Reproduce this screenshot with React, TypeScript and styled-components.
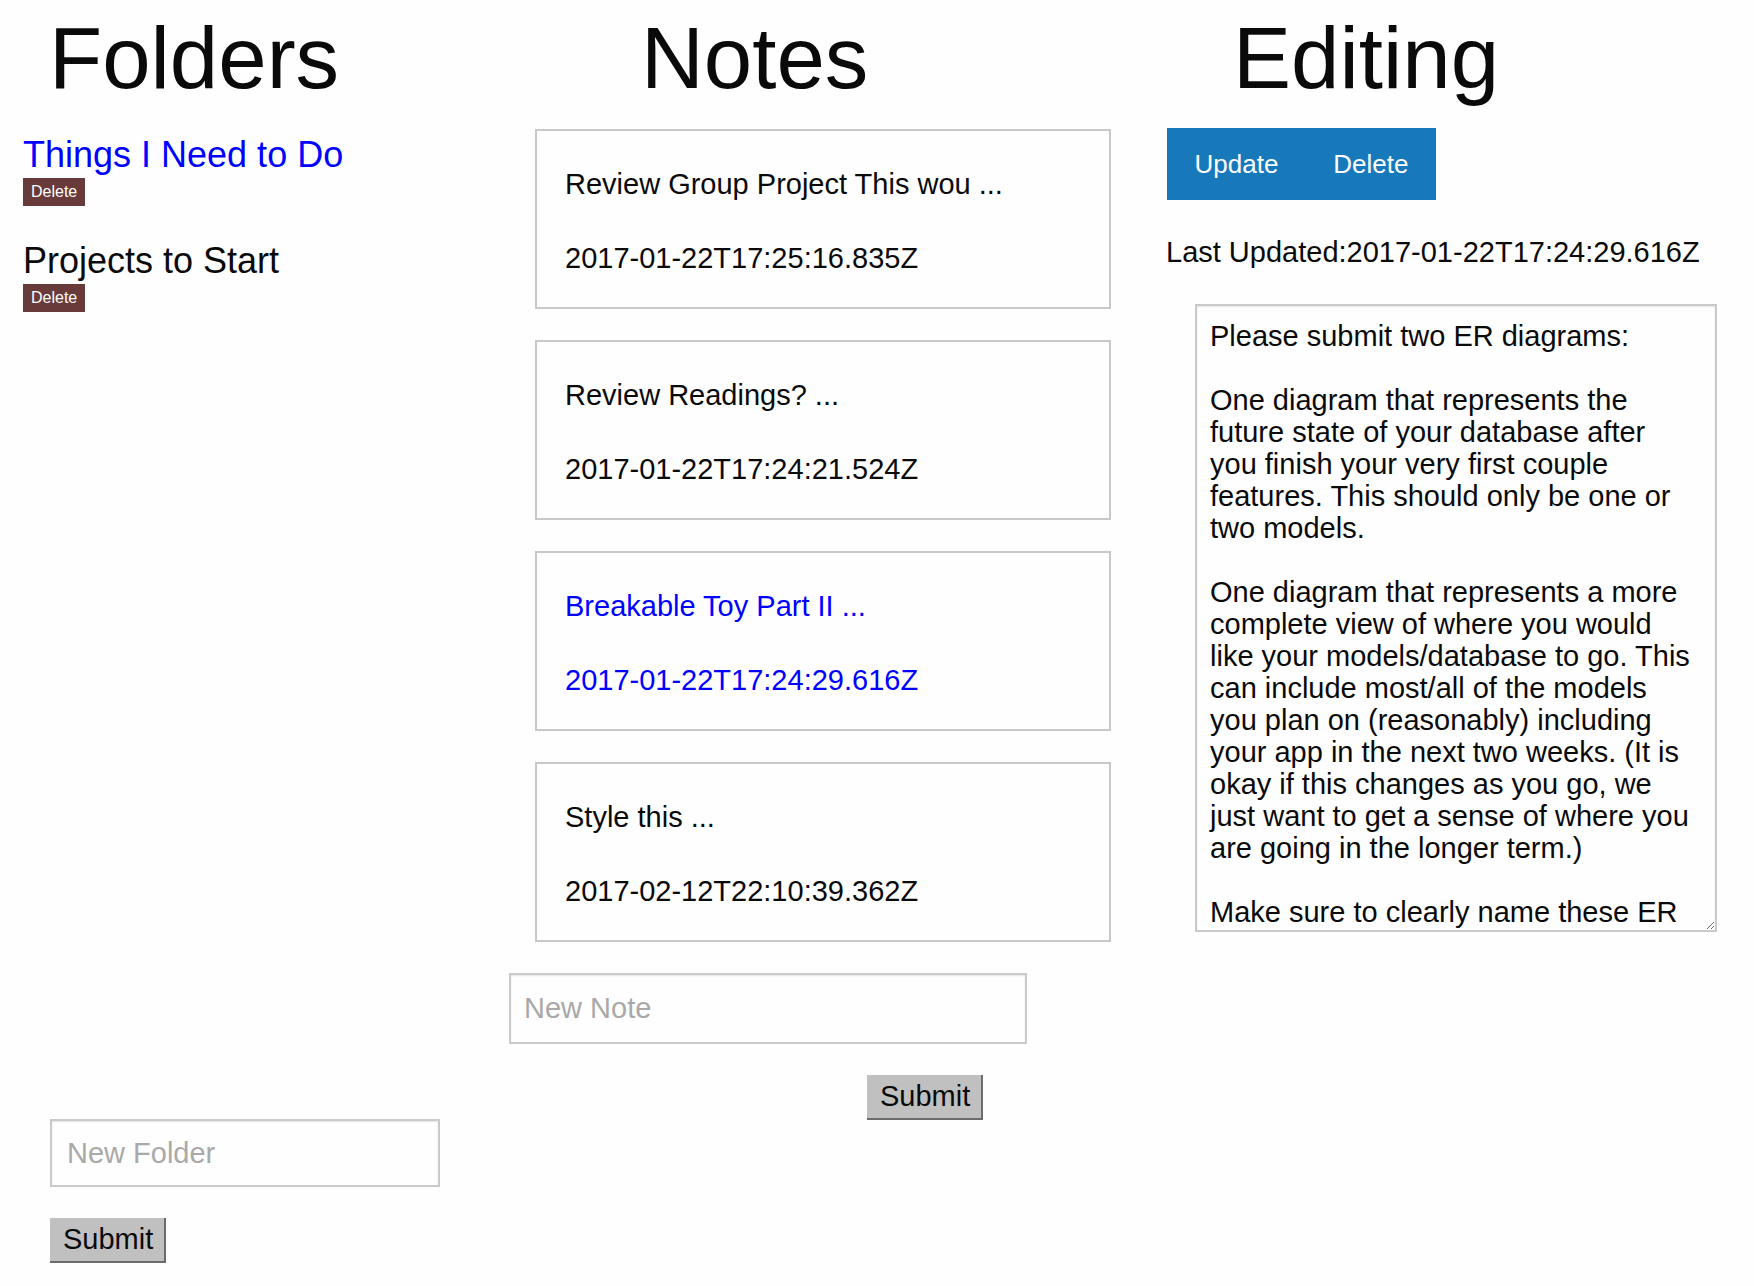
import React from 'react';
import styled, { createGlobalStyle } from 'styled-components';

const GlobalStyle = createGlobalStyle`
  html, body { margin: 0; padding: 0; background: #fefefe; }
  body {
    font-family: "Liberation Sans", Arial, Helvetica, sans-serif;
    color: #0a0a0a;
  }
  *, *::before, *::after { box-sizing: border-box; }
`;

const Page = styled.main`
  display: grid;
  grid-template-columns: 509px 656px 1fr;
  width: 1754px;
  min-height: 1286px;
`;

const Column = styled.section`
  display: flex;
  flex-direction: column;
  align-items: flex-start;
`;

const Heading = styled.h1<{ $indent: number }>`
  margin: 8px 0 0 ${(p) => p.$indent}px;
  font-size: 87px;
  line-height: 100px;
  font-weight: 400;
  color: #0a0a0a;
`;

/* ---------- Folders ---------- */
const FolderList = styled.ul`
  list-style: none;
  margin: 0;
  padding: 25px 0 0 23px;
  height: 1011px;
  display: flex;
  flex-direction: column;
  gap: 33px;
`;

const FolderItem = styled.li`
  display: flex;
  flex-direction: column;
  align-items: flex-start;
`;

const FolderTitle = styled.span<{ $active?: boolean }>`
  font-size: 36px;
  line-height: 43px;
  color: ${(p) => (p.$active ? '#0000ff' : '#0a0a0a')};
  cursor: pointer;
`;

const Badge = styled.button`
  margin-top: 2px;
  height: 28px;
  padding: 0 8px;
  border: none;
  background: #683a3a;
  color: #fefefe;
  font-family: inherit;
  font-size: 16px;
  line-height: 28px;
  cursor: pointer;
`;

const Form = styled.form<{ $indent: number; $gap: number }>`
  display: flex;
  flex-direction: column;
  align-items: flex-start;
  gap: ${(p) => p.$gap}px;
  margin-left: ${(p) => p.$indent}px;
`;

const TextInput = styled.input<{ $width: number; $height: number; $pad: number }>`
  width: ${(p) => p.$width}px;
  height: ${(p) => p.$height}px;
  padding: 0 ${(p) => p.$pad}px;
  border: 2px solid #cacaca;
  box-shadow: inset 0 1px 2px rgba(10, 10, 10, 0.1);
  background: #fefefe;
  font-family: inherit;
  font-size: 29px;
  color: #0a0a0a;
  outline: none;
  &::placeholder { color: #a9a9a9; }
`;

const SubmitButton = styled.button<{ $offset?: number }>`
  margin-left: ${(p) => p.$offset ?? 0}px;
  height: 45px;
  padding: 0 11px 0 13px;
  border: none;
  border-right: 2px solid #6b6b6b;
  border-bottom: 2px solid #6b6b6b;
  background: #c0c0c0;
  color: #0a0a0a;
  font-family: inherit;
  font-size: 29px;
  line-height: 43px;
  cursor: pointer;
`;

/* ---------- Notes ---------- */
const CardList = styled.div`
  display: flex;
  flex-direction: column;
  gap: 31px;
  margin: 21px 0 31px 26px;
`;

const NoteCard = styled.article`
  width: 576px;
  height: 180px;
  padding: 36px 26px 0 28px;
  border: 2px solid #c8c8c8;
  background: #fefefe;
  cursor: pointer;
`;

const NoteLine = styled.p<{ $active?: boolean; $gap?: number }>`
  margin: ${(p) => p.$gap ?? 0}px 0 0;
  font-size: 29px;
  line-height: 34px;
  white-space: nowrap;
  color: ${(p) => (p.$active ? '#0000ff' : '#0a0a0a')};
`;

/* ---------- Editing ---------- */
const ButtonGroup = styled.div`
  display: flex;
  margin: 20px 0 0 2px;
  background: #1779ba;
`;

const GroupButton = styled.button`
  height: 72px;
  padding: 0 27.5px;
  border: none;
  background: #1779ba;
  color: #fefefe;
  font-family: inherit;
  font-size: 26px;
  cursor: pointer;
`;

const LastUpdated = styled.p`
  margin: 35px 0 0 1px;
  font-size: 29px;
  line-height: 34px;
  white-space: nowrap;
`;

const Editor = styled.textarea`
  margin: 35px 0 0 30px;
  width: 522px;
  height: 628px;
  padding: 14px 19px 0 13px;
  border: 2px solid #cacaca;
  box-shadow: inset 0 1px 2px rgba(10, 10, 10, 0.1);
  background: #fefefe;
  color: #0a0a0a;
  font-family: inherit;
  font-size: 29px;
  line-height: 32px;
  overflow: hidden;
  resize: both;
  outline: none;
`;

const folders = [
  { name: 'Things I Need to Do', active: true },
  { name: 'Projects to Start', active: false },
];

const notes = [
  { title: 'Review Group Project This wou ...', date: '2017-01-22T17:25:16.835Z', active: false },
  { title: 'Review Readings? ...', date: '2017-01-22T17:24:21.524Z', active: false },
  { title: 'Breakable Toy Part II ...', date: '2017-01-22T17:24:29.616Z', active: true },
  { title: 'Style this ...', date: '2017-02-12T22:10:39.362Z', active: false },
];

const body = `Please submit two ER diagrams:

One diagram that represents the future state of your database after you finish your very first couple features. This should only be one or two models.

One diagram that represents a more complete view of where you would like your models/database to go. This can include most/all of the models you plan on (reasonably) including your app in the next two weeks. (It is okay if this changes as you go, we just want to get a sense of where you are going in the longer term.)

Make sure to clearly name these ER diagrams so that we can tell which one is which.`;

export default function App() {
  return (
    <>
      <GlobalStyle />
      <Page>
        <Column>
          <Heading $indent={49}>Folders</Heading>
          <FolderList>
            {folders.map((f) => (
              <FolderItem key={f.name}>
                <FolderTitle $active={f.active}>{f.name}</FolderTitle>
                <Badge type="button">Delete</Badge>
              </FolderItem>
            ))}
          </FolderList>
          <Form $indent={50} $gap={31} onSubmit={(e) => e.preventDefault()}>
            <TextInput $width={390} $height={68} $pad={15} placeholder="New Folder" />
            <SubmitButton type="submit">Submit</SubmitButton>
          </Form>
        </Column>

        <Column>
          <Heading $indent={132}>Notes</Heading>
          <CardList>
            {notes.map((n) => (
              <NoteCard key={n.date}>
                <NoteLine $active={n.active}>{n.title}</NoteLine>
                <NoteLine $active={n.active} $gap={40}>{n.date}</NoteLine>
              </NoteCard>
            ))}
          </CardList>
          <Form $indent={0} $gap={31} onSubmit={(e) => e.preventDefault()}>
            <TextInput $width={518} $height={71} $pad={13} placeholder="New Note" />
            <SubmitButton type="submit" $offset={358}>Submit</SubmitButton>
          </Form>
        </Column>

        <Column>
          <Heading $indent={68}>Editing</Heading>
          <ButtonGroup>
            <GroupButton type="button">Update</GroupButton>
            <GroupButton type="button">Delete</GroupButton>
          </ButtonGroup>
          <LastUpdated>Last Updated:2017-01-22T17:24:29.616Z</LastUpdated>
          <Editor defaultValue={body} spellCheck={false} />
        </Column>
      </Page>
    </>
  );
}
